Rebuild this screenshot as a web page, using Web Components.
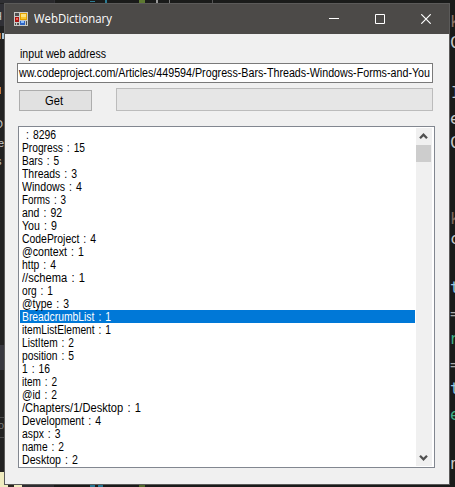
<!DOCTYPE html>
<html lang="en">
<head>
<meta charset="utf-8">
<title>WebDictionary</title>
<style>
html,body{margin:0;width:455px;height:487px;overflow:hidden;background:#1b1d1d}
</style>
</head>
<body>
<dictionary-desktop></dictionary-desktop>
<script>
const define = (name, html, setup) => customElements.define(name, class extends HTMLElement {
  connectedCallback() {
    if (this.shadowRoot) return;
    const t = document.createElement('template');
    t.innerHTML = html;
    this.attachShadow({mode: 'open'}).append(t.content.cloneNode(true));
    if (setup) setup(this, this.shadowRoot);
  }
});

// Text condensed horizontally so the run takes exactly the width in "w".
define('fit-text', `<style>
:host{display:inline-block;white-space:pre}
span{display:inline-block;white-space:pre;transform-origin:0 50%}
</style><span></span>`, (el, root) => {
  const s = root.querySelector('span');
  s.textContent = el.getAttribute('text');
  const w = parseFloat(el.getAttribute('w'));
  if (w) {
    const natural = s.getBoundingClientRect().width;
    s.style.transform = 'scaleX(' + w / natural + ')';
    el.style.width = w + 'px';
  }
});

define('code-backdrop', `<style>
:host{position:absolute;inset:0;overflow:hidden;background:#1a1b1a;font:16px/18px "DejaVu Sans Mono","Liberation Mono",monospace;color:#c8c8c8}
i,b{position:absolute;display:block}
b{font-weight:400;white-space:pre}
.s{font:11px/13px "Liberation Sans",sans-serif}
</style>
<i style="left:0;top:0;width:4px;height:487px;background:#222"></i>
<i style="left:0;top:4px;width:4px;height:22px;background:#303036"></i>
<i style="left:0;top:345px;width:4px;height:25px;background:#38383f"></i>
<i style="left:0;top:417px;width:4px;height:1px;background:#4a4a4a"></i>
<i style="left:0;top:437px;width:4px;height:1px;background:#4a4a4a"></i>
<i style="left:0;top:472px;width:22px;height:15px;background:#f0ecc0"></i>
<i style="left:22px;top:485px;width:32px;height:2px;background:#2d2d30"></i>
<i style="left:8px;top:485px;width:6px;height:2px;background:#29261e"></i>
<i style="left:0;top:0;width:55px;height:3px;background:#303034"></i>
<i style="left:30px;top:0;width:24px;height:3px;background:#28282b"></i>
<i style="left:90px;top:1px;width:5px;height:1px;background:#2c7c94"></i>
<i style="left:105px;top:0;width:2px;height:3px;background:#2c7c94"></i>
<i style="left:139px;top:0;width:6px;height:3px;background:#5d7931"></i>
<i style="left:156px;top:0;width:2px;height:3px;background:#999"></i>
<i style="left:169px;top:0;width:1px;height:3px;background:#777"></i>
<i style="left:212px;top:0;width:1px;height:3px;background:#555"></i>
<i style="left:90px;top:485px;width:5px;height:2px;background:#247591"></i>
<i style="left:98px;top:485px;width:5px;height:2px;background:#247591"></i>
<i style="left:139px;top:485px;width:6px;height:2px;background:#4f692b"></i>
<i style="left:0;top:33px;width:1px;height:6px;background:#c17436"></i>
<i style="left:2px;top:33px;width:2px;height:6px;background:#a9c6d8"></i>
<i style="left:0;top:87px;width:1px;height:7px;background:#c87840"></i>
<b class="s" style="left:-6px;top:10px">H</b>
<b class="s" style="left:-5px;top:118px">D</b>
<b class="s" style="left:-2px;top:137px">e</b>
<b class="s" style="left:-4px;top:155px">s</b>
<b class="s" style="left:-2px;top:419px;color:#777">o</b>
<b style="left:450px;top:13px;color:#8d7566">k</b>
<b style="left:450px;top:34px">C</b>
<b style="left:451px;top:84px">I</b>
<b style="left:450px;top:110px">e</b>
<b style="left:450px;top:134px">C</b>
<b style="left:450px;top:210px;color:#806a5c">k</b>
<b style="left:450px;top:230px">c</b>
<b style="left:450px;top:279px;color:#9cc8e0">t</b>
<b style="left:450px;top:305px;color:#aaa">=</b>
<b style="left:449px;top:330px;color:#3fae86">r</b>
<b style="left:450px;top:356px;color:#aaa">=</b>
<b style="left:450px;top:380px;color:#9cc8e0">t</b>
<b style="left:450px;top:406px;color:#3fae86">e</b>
<b style="left:450px;top:455px">n</b>`);

define('title-bar', `<style>
:host{display:flex;align-items:center;height:30px;background:#4c4a48;color:#fff;padding-left:9px;font:12px/16px "Open Sans","Noto Sans",sans-serif}
svg{display:block;flex:none}
.name{flex:1;padding:0 0 1px 6px}
.btn{width:45px;display:flex;justify-content:center}
.min{width:47px}.close{width:47px}
</style>
<svg width="14" height="14" viewBox="0 0 14 14" shape-rendering="crispEdges">
<path fill="#c9c9c5" d="M0 0h14v14H0z"/>
<path fill="#505050" d="M1 1h4v3H1z"/>
<path fill="#a81414" d="M1 5h4v5H1z"/><path fill="#f26450" d="M2 6h2v2H2z"/>
<path fill="#e4a000" d="M6 1h7v7H6z"/><path fill="#ffe27a" d="M7 2h5v3H7z"/><path fill="#fbc82c" d="M7 5h5v2H7z"/>
<path fill="#505050" d="M1 11h1v2H1zM3 11h2v2H3zM12 9h1v4h-1z"/>
<path fill="#2f66c4" d="M6 9h5v4H6z"/><path fill="#8fc0ff" d="M7 9h3v2H7z"/>
</svg>
<span class="name"><fit-text text="WebDictionary" w="78"></fit-text></span>
<span class="btn min"><svg width="10" height="10"><path d="M0 4.5h10" stroke="#fff"/></svg></span>
<span class="btn"><svg width="10" height="10"><path d="M.5.5h9v9h-9z" fill="none" stroke="#fff"/></svg></span>
<span class="btn close"><svg width="10" height="10"><path d="M.3.3l9.4 9.4M9.7.3L.3 9.7" fill="none" stroke="#fff" stroke-width="1.2"/></svg></span>`);

define('address-box', `<style>
:host{display:flex;align-items:center;justify-content:flex-end;box-sizing:border-box;width:416px;height:20px;margin-left:12px;background:#fff;border:1px solid #7a7a7a;overflow:hidden;padding-right:2px}
</style><fit-text text="ww.codeproject.com/Articles/449594/Progress-Bars-Threads-Windows-Forms-and-You" w="411"></fit-text>`);

define('push-button', `<style>
:host{display:flex;align-items:center;justify-content:center;box-sizing:border-box;width:73px;height:21px;background:#e1e1e1;border:1px solid #adadad;padding-right:3px}
</style><slot></slot>`);

define('progress-track', `<style>
:host{display:block;box-sizing:border-box;width:317px;height:23px;background:#e6e6e6;border:1px solid #bcbcbc}
</style>`);

define('scroll-bar', `<style>
:host{display:flex;flex-direction:column;align-items:center;width:16px;height:338px;background:#f0f0f0}
.thumb{width:15px;height:17px;background:#cdcdcd;align-self:flex-start}
.gap{flex:1}
.arrow{height:17px;display:flex;align-items:center;padding-right:1px}
svg{display:block}
</style>
<span class="arrow"><svg width="9" height="7"><path d="M1 5.2l3.5-3.5L8 5.2" fill="none" stroke="#505050" stroke-width="2.3"/></svg></span>
<span class="thumb"></span><span class="gap"></span>
<span class="arrow"><svg width="9" height="7"><path d="M1 1.8l3.5 3.5L8 1.8" fill="none" stroke="#505050" stroke-width="2.3"/></svg></span>`);

define('word-row', `<style>
:host{display:block;height:13px;line-height:14px;padding-left:2px;width:393px;white-space:pre;word-spacing:1.3px}
:host([selected]){background:#0078d7;color:#fff}
</style><slot></slot>`);

const words = [[' : 8296',34],['Progress : 15',63],['Bars : 5',37],['Threads : 3',55],['Windows : 4',60],
['Forms : 3',44],['and : 92',40],['You : 9',35],['CodeProject : 4',74],['@context : 1',62],['http : 4',34],
['//schema : 1',63],['org : 1',31],['@type : 3',47],['BreadcrumbList : 1',89],['itemListElement : 1',89],
['ListItem : 2',52],['position : 5',52],['1 : 16',28],['item : 2',35],['@id : 2',35],
['/Chapters/1/Desktop : 1',119],['Development : 4',79],['aspx : 3',38.5],['name : 2',42],['Desktop : 2',56]];

define('word-list', `<style>
:host{display:flex;box-sizing:border-box;width:417px;height:342px;margin-left:13px;background:#fff;border:1px solid #828790;padding:1px}
.rows{width:396px}
</style><div class="rows"></div><scroll-bar></scroll-bar>`, (el, root) => {
  root.querySelector('.rows').innerHTML = words.map(([t, w], i) =>
    `<word-row${i === 14 ? ' selected' : ''}><fit-text text="${t}" w="${w}"></fit-text></word-row>`).join('');
});

define('app-window', `<style>
:host{position:absolute;left:4px;top:3px;box-sizing:border-box;width:446px;height:482px;border:1px solid #5b5a59;background:#f0f0f0;color:#000;font:12px/14px "Liberation Sans",Arial,sans-serif;display:flex;flex-direction:column}
.label{height:29px;box-sizing:border-box;padding:13px 0 0 15px}
.tools{display:flex;height:23px;margin:5px 0 15px 14px;gap:24px}
push-button{margin-top:2px}
</style>
<title-bar></title-bar>
<div class="label"><fit-text text="input web address" w="86"></fit-text></div>
<address-box></address-box>
<div class="tools"><push-button><fit-text text="Get" w="18"></fit-text></push-button><progress-track></progress-track></div>
<word-list></word-list>`);

define('dictionary-desktop', `<style>
:host{display:block;position:relative;width:455px;height:487px;overflow:hidden}
</style><code-backdrop></code-backdrop><app-window></app-window>`);
</script>
</body>
</html>
